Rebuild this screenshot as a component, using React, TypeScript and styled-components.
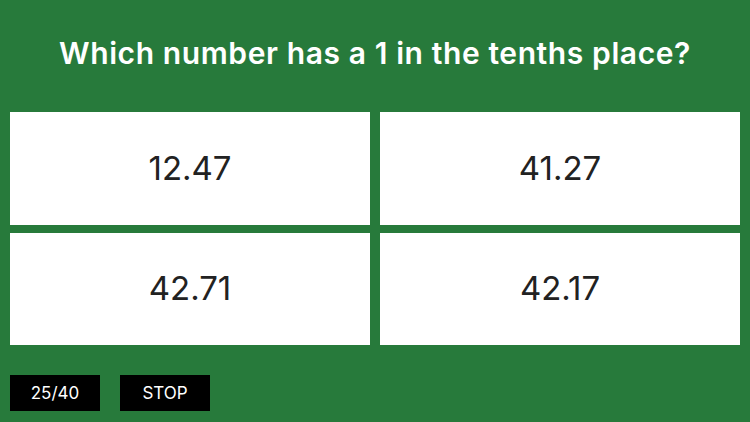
import React from 'react';
import styled, {createGlobalStyle} from 'styled-components';

const GlobalStyle = createGlobalStyle`
  html, body {
    margin: 0;
    padding: 0;
    background: #277a3b;
  }
  body {
    font-family: Inter, 'Noto Sans', sans-serif;
  }
`;

const Screen = styled.div`
  width: 750px;
  height: 422px;
  background: #277a3b;
  display: flex;
  flex-direction: column;
  box-sizing: border-box;
  padding: 0 10px;
`;

const Question = styled.h1`
  margin: 0;
  height: 112px;
  display: flex;
  align-items: center;
  justify-content: center;
  padding-bottom: 6px;
  box-sizing: border-box;
  color: #ffffff;
  font-size: 30px;
  font-weight: 600;
  letter-spacing: 0.6px;
`;

const Answers = styled.div`
  display: grid;
  grid-template-columns: 360px 360px;
  grid-template-rows: 113px 112px;
  column-gap: 10px;
  row-gap: 8px;
`;

const Answer = styled.button`
  border: none;
  background: #ffffff;
  display: flex;
  align-items: center;
  justify-content: center;
  padding: 0 0 2px;
  color: #222222;
  font-family: Inter, 'Noto Sans', sans-serif;
  font-size: 33px;
  font-weight: 400;
  cursor: pointer;
`;

const Footer = styled.div`
  display: flex;
  gap: 20px;
  margin-top: 30px;
`;

const Chip = styled.button`
  width: 90px;
  height: 36px;
  border: none;
  background: #000000;
  color: #ffffff;
  font-family: Inter, 'Noto Sans', sans-serif;
  font-size: 17px;
  display: flex;
  align-items: center;
  justify-content: center;
  padding: 0;
`;

const answers = ['12.47', '41.27', '42.71', '42.17'];

const App = () => (
  <>
    <GlobalStyle />
    <Screen>
      <Question>Which number has a 1 in the tenths place?</Question>
      <Answers>
        {answers.map((a) => (
          <Answer key={a}>{a}</Answer>
        ))}
      </Answers>
      <Footer>
        <Chip>25/40</Chip>
        <Chip>STOP</Chip>
      </Footer>
    </Screen>
  </>
);

export default App;
